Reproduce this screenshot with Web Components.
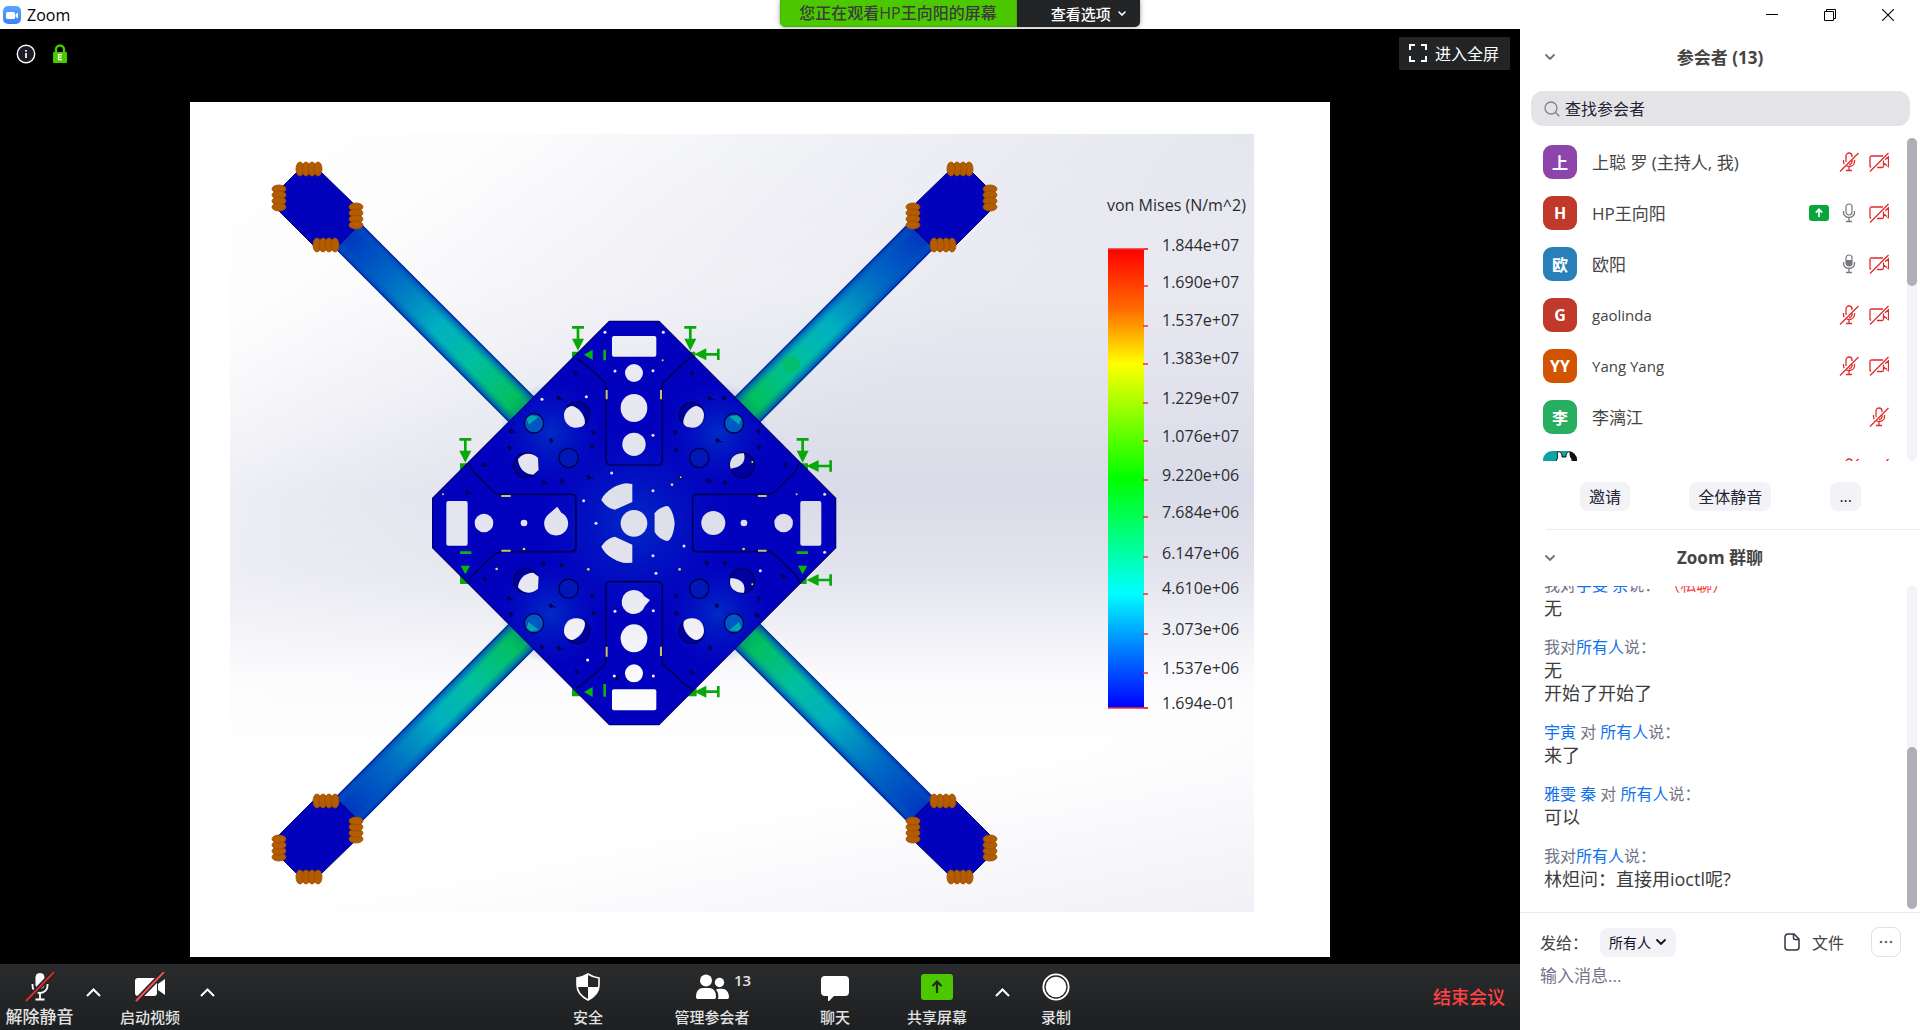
<!DOCTYPE html>
<html lang="zh-CN">
<head>
<meta charset="utf-8">
<title>Zoom</title>
<style>
  html, body { height: 100%; margin: 0; }
  body { overflow: hidden; background: #fff; font-family: "Open Sans", "Noto Sans CJK SC", sans-serif; font-size: 16px; color: #444; }
</style>
</head>
<body>
<zoom-app></zoom-app>
<script>
const RESET = `<style>
  * { box-sizing: border-box; }
  button, input, select, textarea { font: inherit; color: inherit; background: none; border: 0; padding: 0; margin: 0; outline: 0; }
  svg { display: block; }
  a { text-decoration: none; }
</style>`;

function define(name, render) {
  customElements.define(name, class extends HTMLElement {
    connectedCallback() {
      if (this.shadowRoot) return;
      const t = document.createElement('template');
      t.innerHTML = RESET + render(this);
      this.attachShadow({ mode: 'open' }).appendChild(t.content.cloneNode(true));
    }
  });
}

const ICONS = {
  logo: [18, 18, `<defs><linearGradient id="g" x2="0" y2="1"><stop stop-color="#5aa5ff"/><stop offset="1" stop-color="#3a80fb"/></linearGradient></defs><rect width="18" height="18" rx="5" fill="url(#g)"/><rect x="3" y="6" width="9" height="7" rx="1.500" fill="#fff"/><path d="M12.500 8.500 15 6.500v6l-2.500-2z" fill="#fff"/>`],
  info: [20, 20, `<circle cx="10" cy="10" r="8.700" fill="#1c1c26" stroke="#fff" stroke-width="1.400"/><path d="M10 6v1.800M10 9v5" stroke="#fff" stroke-width="1.700"/>`],
  lock: [14, 20, `<path d="M3 9V5.500a4 4 0 0 1 8 0V9" fill="none" stroke="#4bc800" stroke-width="2.400"/><rect y="8" width="14" height="11" rx="1" fill="#4bc800"/><path d="M9 10.700H5.500v5H9M5.500 13.200h3" fill="none" stroke="#fff" stroke-width="1.200"/>`],
  expand: [18, 18, `<path d="M1 6V1h5M12 1h5v5M17 12v5h-5M6 17H1v-5" fill="none" stroke="#fff" stroke-width="2"/>`],
  min: [12, 12, `<path d="M0 5.500h12" stroke="#000"/>`],
  restore: [12, 12, `<path d="M.5 2.500h9v9h-9zM2.500 2.500v-2h9v9h-2" fill="none" stroke="#000"/>`],
  close: [12, 12, `<path d="m0 0 12 12M12 0 0 12" stroke="#000" stroke-width="1.100"/>`],
  down: [10, 6, `<path d="m1 1 4 4 4-4" fill="none" stroke="currentColor" stroke-width="1.800" stroke-linecap="round"/>`],
  caret: [8, 5, `<path d="m1 1 3 3 3-3" fill="none" stroke="currentColor" stroke-width="1.600" stroke-linecap="round"/>`],
  up: [15, 9, `<path d="m1 8 6.500-6.500L14 8" fill="none" stroke="#fff" stroke-width="2"/>`],
  search: [16, 16, `<circle cx="7" cy="7" r="6" fill="none" stroke="#82828f" stroke-width="1.300"/><path d="m11.300 11.300 4 4" stroke="#82828f" stroke-width="1.300"/>`],
  mic: [14, 20, `<rect x="4" y="1" width="6" height="11" rx="3" fill="none" stroke="#77777f" stroke-width="1.200"/><path d="M1.500 8v1.500a5.500 5 0 0 0 11 0V8M7 15v3.500M4 18.500h6" fill="none" stroke="#77777f" stroke-width="1.300"/>`],
  micfill: [14, 20, `<rect x="4" y="1" width="6" height="11" rx="3" fill="#fff" stroke="#77777f" stroke-width="1.200"/><path d="M4 6h6v3a3 3 0 0 1-6 0z" fill="#77777f"/><path d="M1.500 8v1.500a5.500 5 0 0 0 11 0V8M7 15v3.500M4 18.500h6" fill="none" stroke="#77777f" stroke-width="1.300"/>`],
  micoff: [20, 20, `<g fill="none" stroke="#e02b2b" stroke-width="1.300"><path d="M7 10V4a3 3 0 0 1 6 0v1M13 8v2a3 3 0 0 1-3 2.500M4.500 8v1.500c0 1 .3 2 .8 2.700M15.500 8v1.500c0 3-2.500 5-5.500 5-1 0-1.700-.2-2.300-.5M10 15v3.500M7 18.500h6M1 19.500 19.500 1"/></g>`],
  camoff: [20, 20, `<g fill="none" stroke="#e02b2b" stroke-width="1.300"><path d="M14 4H2.500C1.500 4 1 4.500 1 5.500v9l1 1M8 15.500h5c1 0 1.500-.5 1.500-1.500V8.500M14.500 11l5 3.500V4.800l-3.500 3M1 19.500 19.500 1"/></g>`],
  sharing: [20, 16, `<rect width="20" height="16" rx="3" fill="#08a73a"/><path d="M10 12V4.500M6.800 7.600 10 4.300l3.200 3.300" fill="none" stroke="#fff" stroke-width="1.700"/>`],
  bigmic: [30, 30, `<rect x="10.500" y="1" width="9" height="16" rx="4.500" fill="#fff"/><path d="M7.500 12v2a7.500 7 0 0 0 15 0v-2M15 21v6M10.500 27.500h9" fill="none" stroke="#fff" stroke-width="1.800"/><path d="M1 29 29 0" stroke="#222426" stroke-width="5"/><path d="M1 29 29 0" stroke="#e02b2b" stroke-width="1.800"/>`],
  bigcam: [32, 30, `<rect x="1" y="6" width="22" height="18" rx="3" fill="#fff"/><path d="m24 12 7-5v16l-7-5z" fill="#fff"/><path d="M2 29 30 0" stroke="#222426" stroke-width="5"/><path d="M2 29 30 0" stroke="#f05050" stroke-width="2"/>`],
  shield: [24, 28, `<path d="M12 1c3 2 7 3.500 11 4v7c0 7-5 12-11 15C6 24 1 19 1 12V5c4-.5 8-2 11-4z" fill="none" stroke="#fff" stroke-width="1.600"/><path d="M12 1C9 3 5 4.500 1 5v9h11zM12 14h11c-1 6-5 10.500-11 13z" fill="#fff"/>`],
  people: [34, 28, `<circle cx="11" cy="7.500" r="6" fill="#fff"/><path d="M1 24c0-6 3-9 7-9h6c4 0 7 3 7 9 0 1.500-1 2-2 2H3c-1 0-2-.5-2-2z" fill="#fff"/><circle cx="24.500" cy="9.500" r="4.700" fill="#fff"/><path d="M23 26c1-4 0-7-2-9.500 1-.6 2-.8 3-.8h3c4 0 7 3.300 7 8.300 0 1.500-1 2-2 2z" fill="#fff"/>`],
  chat: [28, 28, `<path d="M4 3h20a4 4 0 0 1 4 4v12a4 4 0 0 1-4 4H13l-6 6v-6H4a4 4 0 0 1-4-4V7a4 4 0 0 1 4-4z" fill="#fff"/>`],
  share: [32, 26, `<rect width="32" height="26" rx="3" fill="#4bc800"/><path d="M16 19V8M11.500 12 16 7.500l4.500 4.500" fill="none" stroke="#1f2b1a" stroke-width="2.200"/>`],
  record: [28, 28, `<circle cx="14" cy="14" r="12.600" fill="none" stroke="#fff" stroke-width="1.900"/><circle cx="14" cy="14" r="10.300" fill="#fff"/>`],
  file: [16, 18, `<path d="M4 1h6l5 5v8a3 3 0 0 1-3 3H4a3 3 0 0 1-3-3V4a3 3 0 0 1 3-3zM9.500 1v4a1.500 1.500 0 0 0 1.500 1.500h4" fill="none" stroke="#33334a" stroke-width="1.500"/>`],
  dots: [14, 4, `<circle cx="2" cy="2" r="1.300" fill="#6b6b80"/><circle cx="7" cy="2" r="1.300" fill="#6b6b80"/><circle cx="12" cy="2" r="1.300" fill="#6b6b80"/>`],
  rabbit: [34, 34, `<clipPath id="r"><rect width="34" height="34" rx="9"/></clipPath><g clip-path="url(#r)"><rect width="34" height="34" fill="#0fa3a6"/><path d="M27 0h7v34h-7z" fill="#111"/><path d="M13 34V10c2-3 2-5 1-9 4-1 5 2 5 5h4c0-3 1-6 4-5 0 3 0 5 2 7v26z" fill="#fff" stroke="#111"/></g>`]
};

define('ui-icon', el => {
  const [w, h, body] = ICONS[el.getAttribute('name')];
  return `<style>:host { display: block; flex: none; }</style>
  <svg width="${w}" height="${h}" viewBox="0 0 ${w} ${h}" aria-hidden="true">${body}</svg>`;
});

define('title-bar', () => `
<style>
  :host { display: grid; grid-template-columns: 1fr auto 1fr; height: 29px; background: #fff; color: #000; flex: none; }
  .name { display: flex; align-items: center; gap: 6px; padding-left: 3px; }
  .banner { display: flex; height: 27px; line-height: 26px; border-radius: 0 0 5px 5px; overflow: hidden; box-shadow: 0 0 5px #0006; }
  .watch { background: #4bc800; color: #3c3c3c; padding: 0 19px 0 18px; font-weight: 500; border: 1px solid #43b400; border-top: 0; }
  .options { background: #222426; color: #fff; display: flex; align-items: center; gap: 7px; padding: 0 14px 0 34px; font-size: 15px; font-weight: 500; }
  .win { display: flex; justify-content: flex-end; padding-right: 3px; }
  .win button { width: 58px; display: grid; place-items: center; }
</style>
<div class="name"><ui-icon name="logo"></ui-icon><span>Zoom</span></div>
<div class="banner"><div class="watch">您正在观看HP王向阳的屏幕</div><button class="options">查看选项<ui-icon name="caret"></ui-icon></button></div>
<div class="win">
  <button aria-label="最小化"><ui-icon name="min"></ui-icon></button>
  <button aria-label="还原"><ui-icon name="restore"></ui-icon></button>
  <button aria-label="关闭"><ui-icon name="close"></ui-icon></button>
</div>`);

const LEGEND = [[245,'1.844e+07',249],[282,'1.690e+07',286],[320,'1.537e+07',326],[358,'1.383e+07',364],[398,'1.229e+07',403],[436,'1.076e+07',441],[475,'9.220e+06',480],[512,'7.684e+06',517],[553,'6.147e+06',557],[588,'4.610e+06',594],[629,'3.073e+06',634],[668,'1.537e+06',673],[703,'1.694e-01',708]];

define('stress-plot', () => {
  const cap = (x, y, v) => {
    let s = '';
    for (let i = -9; i <= 9; i += 6) s += `<ellipse cx="${v ? x : x + i}" cy="${v ? y + i : y}" rx="${v ? 7 : 4}" ry="${v ? 4 : 7}"/>`;
    return s;
  };
  const holes = `
    <rect x="576" y="108" width="133" height="62" rx="6"/><rect x="576" y="1168" width="133" height="63" rx="6"/>
    <rect x="79" y="603" width="64" height="134" rx="6"/><rect x="1141" y="603" width="63" height="134" rx="6"/>
    <circle cx="642" cy="219" r="27"/><ellipse cx="642" cy="324" rx="40" ry="42"/><circle cx="642" cy="433" r="35"/>
    <circle cx="642" cy="670" r="40"/>
    <path d="M642 870a36 36 0 1 0 33 48l15-18-17-11a36 36 0 0 0-31-19z"/><ellipse cx="642" cy="1015" rx="40" ry="42"/><circle cx="642" cy="1120" r="27"/>
    <circle cx="192" cy="669" r="28"/><circle cx="312" cy="669" r="10"/><path d="M412 620l12 18a36 36 0 1 1-40 6z"/>
    <circle cx="880" cy="669" r="36"/><circle cx="972" cy="669" r="10"/><circle cx="1091" cy="669" r="28"/>
    <path d="M637 552v54l-52 23c-18-4-32-14-41-30 12-28 52-48 75-49z"/><path d="M637 788v-54l-52-24c-18 4-32 14-41 30 12 28 52 48 75 49z"/>
    <path d="M704 640c6-10 24-22 40-22 10 8 18 28 20 52-2 24-8 46-20 53-16-2-34-14-40-28z"/>
    <path d="M432 345c0-14 10-26 24-27 16 2 38 24 39 48 0 12-12 17-28 17-20 0-35-16-35-38z"/><path d="M294 478c16-20 40-22 60-4l2 36-16 14c-26 0-44-20-46-46z"/>
    <path d="M852 345c0-14-10-26-24-27-16 2-37 24-38 48 0 12 12 17 28 17 20 0 34-16 34-38z"/><path d="M972 460c6 22-4 42-40 46-8-24 8-48 40-46z"/>
    <path d="M294 862c16 20 40 22 60 4l2-36-16-12c-26 0-44 20-46 44z"/><path d="M432 993c0 14 10 26 24 27 16-2 38-24 39-48 0-12-12-17-28-17-20 0-35 16-35 38z"/>
    <path d="M852 993c0 14-10 26-24 27-16-2-37-24-38-48 0-12 12-17 28-17 20 0 34 16 34 38z"/><path d="M972 878c6-22-4-42-40-44-8 24 8 46 40 44z"/>
    <g>${[[699,572],[575,519],[699,767],[708,820],[528,670],[792,738],[699,212],[585,213],[699,406],[700,932],[585,934],[700,1128],[583,1128],[491,602],[555,97],[730,97],[366,298],[1214,583],[1214,757],[499,290],[503,1080],[1021,812]].map(p => `<circle cx="${p[0]}" cy="${p[1]}" r="4.500"/>`).join('')}</g>`;
  const panel = `<path d="M468 175Q485 182 552 244Q558 250 558 265V480Q558 495 572 495H712Q727 495 727 480V250L797 184Q808 176 820 172"/>`;
  const side = `<path d="M150 492Q152 506 162 517L222 576Q230 583 240 583H455Q468 583 468 597V742Q468 755 455 755H240Q230 757 222 764L158 825Q148 836 150 845"/>`;
  const dimples = [[342,370],[446,474],[342,970],[446,866],[942,370],[838,474],[942,970],[838,866]];
  const dark = [[415,294],[520,398],[393,422],[370,548],[424,544],[268,444],[190,495],[515,440],[912,294],[868,296],[765,398],[768,451],[892,422],[1016,442],[1095,495],[864,542],[915,548],[781,532],[505,532],[370,792],[424,796],[266,896],[194,838],[272,944],[392,918],[520,940],[365,1042],[416,1045],[516,888],[768,888],[768,940],[890,918],[1016,896],[1010,946],[860,790],[915,790],[1088,830],[870,1044],[590,1135],[142,578],[467,220],[816,220],[272,394],[1016,394],[470,1117],[813,1117]];
  const downs = [[474,80],[811,80],[136,416],[1148,416]], lefts = [[895,163],[1232,498],[1232,840],[895,1175]];
  return `
<style>
  :host { display: block; background: #fff; }
  svg { width: 100%; height: 100%; }
  text { font-family: "Open Sans", sans-serif; font-size: 16px; fill: #2c2c30; }
</style>
<svg viewBox="190 102 1140 855" role="img" aria-label="von Mises">
  <defs>
    <linearGradient id="sky" gradientUnits="userSpaceOnUse" x1="0" y1="134" x2="0" y2="912">
      <stop stop-color="#e5e7ef"/><stop offset=".2" stop-color="#e9e9f1"/><stop offset=".46" stop-color="#d9dbe8"/><stop offset=".56" stop-color="#e2e3ed"/><stop offset=".7" stop-color="#fbfbfd"/><stop offset=".8" stop-color="#fff"/><stop offset="1" stop-color="#fff"/>
    </linearGradient>
    <linearGradient id="haze" gradientUnits="userSpaceOnUse" x1="350" y1="60" x2="700" y2="560">
      <stop stop-color="#fff"/><stop offset=".25" stop-color="#fff" stop-opacity=".9"/><stop offset=".6" stop-color="#fff" stop-opacity=".35"/><stop offset=".95" stop-color="#fff" stop-opacity="0"/>
    </linearGradient>
    <linearGradient id="floor" gradientUnits="userSpaceOnUse" x1="1100" y1="740" x2="1140" y2="940">
      <stop stop-color="#f1f0f6" stop-opacity="0"/><stop offset="1" stop-color="#f1f0f6"/>
    </linearGradient>
    <linearGradient id="scale" x2="0" y2="1">
      <stop stop-color="#f00"/><stop offset=".13" stop-color="#ff6a00"/><stop offset=".25" stop-color="#ff0"/><stop offset=".5" stop-color="#0f0"/><stop offset=".75" stop-color="#0ff"/><stop offset=".87" stop-color="#0080ff"/><stop offset="1" stop-color="#00f"/>
    </linearGradient>
    <linearGradient id="along"><stop stop-color="#0030c0"/><stop offset=".25" stop-color="#0068c4"/><stop offset=".5" stop-color="#00b0c0"/><stop offset=".68" stop-color="#00bfa0"/><stop offset=".9" stop-color="#02c05a"/></linearGradient>
    <linearGradient id="across" x2="0" y2="1"><stop stop-color="#0018a0"/><stop offset=".07" stop-color="#0048b8" stop-opacity=".7"/><stop offset=".28" stop-color="#0068c0" stop-opacity="0"/><stop offset=".72" stop-color="#0068c0" stop-opacity="0"/><stop offset=".93" stop-color="#0048b8" stop-opacity=".7"/><stop offset="1" stop-color="#0018a0"/></linearGradient>
    <radialGradient id="glow"><stop stop-color="#0040c8" stop-opacity=".65"/><stop offset="1" stop-color="#0020c8" stop-opacity="0"/></radialGradient>
    <mask id="cut"><rect width="1300" height="1340" fill="#fff"/><g fill="#000">${holes}</g></mask>
    <g id="arm">
      <g transform="translate(350 238) rotate(45)"><rect x="-12" y="-18" width="274" height="36" fill="url(#along)"/><rect x="-12" y="-18" width="274" height="36" fill="url(#across)"/></g>
      <path d="M297 172h24l36 35v20l-21 21h-20l-37-37v-21z" fill="#0202bc" stroke="#00007a"/>
      <g fill="#b35c00" stroke="#9a4c00" stroke-width=".8">${cap(309,169)}${cap(279,198,1)}${cap(356,216,1)}${cap(326,245)}</g>
    </g>
    <g id="dn"><path d="M-18 2h36M0 2v38" stroke="#08a808" stroke-width="8"/><path d="M-18 36H18L0 72z" fill="#08a808"/></g>
    <g id="lf"><path d="M0-17v34M0 0h-40" stroke="#08a808" stroke-width="8"/><path d="M-36-18V18L-72 0z" fill="#08a808"/></g>
  </defs>
  <rect x="230" y="134" width="1024" height="778" fill="url(#sky)"/>
  <rect x="230" y="134" width="1024" height="778" fill="url(#haze)"/>
  <rect x="230" y="700" width="1024" height="212" fill="url(#floor)"/>
  <use href="#arm"/><use href="#arm" transform="matrix(-1 0 0 1 1269 0)"/><use href="#arm" transform="matrix(1 0 0 -1 0 1046)"/><use href="#arm" transform="matrix(-1 0 0 -1 1269 1046)"/>
  <circle cx="791" cy="364" r="9" fill="#04bf50" opacity=".6"/>
  <g transform="translate(420 300) scale(.3333)">
    <g fill="#08a808"><path d="M456 155h30v22h-30zM796 155h30v22h-30zM120 490h30v22h-30zM1134 490h30v22h-30zM120 828h34v24h-34zM1130 828h30v24h-30zM456 1165h34v24h-34zM800 1165h30v24h-30z"/></g>
    <g mask="url(#cut)">
      <path d="M568 64H717L1247 595V743L717 1274H568L38 743V595z" fill="#0202be" stroke="#000078" stroke-width="4"/>
      <circle cx="642" cy="670" r="280" fill="url(#glow)"/>
      ${[[390,400],[894,400],[390,940],[894,940]].map(p => `<circle cx="${p[0]}" cy="${p[1]}" r="150" fill="url(#glow)"/>`).join('')}
      <g fill="#0000a0" stroke="#000050" stroke-width="4"><circle cx="472" cy="342" r="37"/><circle cx="318" cy="496" r="37"/><circle cx="815" cy="345" r="37"/><circle cx="967" cy="496" r="37"/><circle cx="318" cy="842" r="37"/><circle cx="472" cy="994" r="37"/><circle cx="815" cy="994" r="37"/><circle cx="967" cy="842" r="37"/></g>
      <g fill="none" stroke="#000058" stroke-width="5">${panel}${side}<g transform="matrix(1 0 0 -1 0 1340)">${panel}</g><g transform="matrix(-1 0 0 1 1286 0)">${side}</g></g>
      <g stroke="#000048" stroke-width="4">${dimples.map((p, i) => `<circle cx="${p[0]}" cy="${p[1]}" r="29" fill="${i % 2 ? '#0018b8' : '#0058c4'}"/>`).join('')}</g>
      <g fill="#00a8b0"><path d="M320 356l12-10 24 4-30 24zM964 356l-12-10-24 4 30 24zM320 984l12 10 24-4-30-24zM964 984l-12 10-24-4 30-24z"/></g>
      <g fill="#000a60" stroke="#000040" stroke-width="3">${dark.map((p, i) => `<path d="M${p[0] - 5} ${p[1] - 3}l7-3 4 7-6 5z${i % 3 ? '' : 'm8 4l12 3'}"/>`).join('')}</g>
    </g>
    <path d="M560 270v28M723 270v28M560 1040v30M723 1040v28M244 588h28M1014 588h26M244 752h28M1014 752h26" stroke="#c9c470" stroke-width="6"/>
    <g fill="#d8e040"><circle cx="756" cy="554" r="4"/><circle cx="782" cy="532" r="3"/><circle cx="230" cy="807" r="4"/><circle cx="505" cy="808" r="4"/><circle cx="779" cy="808" r="4"/><circle cx="728" cy="181" r="3"/><circle cx="997" cy="486" r="3"/><circle cx="997" cy="853" r="3"/><circle cx="971" cy="747" r="4"/><circle cx="312" cy="747" r="4"/><circle cx="1130" cy="583" r="3"/><circle cx="69" cy="583" r="3"/></g>
    ${downs.map(p => `<use href="#dn" transform="translate(${p})"/>`).join('')}${lefts.map(p => `<use href="#lf" transform="translate(${p})"/>`).join('')}
    <g fill="#08b808"><path d="M518 149v30l-26-15zM518 1161v30l-26-15zM122 797h28l-14 26zM1134 797h28l-14 26z"/><path d="M550 149h8v32h-8zM550 1152h8v38h-8zM120 754h34v8h-34zM1130 754h34v8h-34z"/></g>
  </g>
  <rect x="1108" y="249" width="36" height="459" fill="url(#scale)"/>
  <g stroke="#f03030" stroke-width="1.500"><path d="M1108 249h40M1108 708h40"/>${LEGEND.map(l => `<path d="M1143 ${l[2]}h5"/>`).join('')}</g>
  <text x="1107" y="211">von Mises (N/m^2)</text>
  ${LEGEND.map(l => `<text x="1162" y="${l[0] + 6}">${l[1]}</text>`).join('')}
</svg>`;
});

define('share-stage', () => `
<style>
  :host { display: flex; flex-direction: column; align-items: center; flex: 1; min-height: 0; background: #000; color: #fff; }
  .top { display: flex; width: 100%; height: 73px; align-items: flex-start; padding: 8px 10px 0 16px; flex: none; }
  .badges { display: flex; gap: 17px; padding-top: 7px; flex: 1; }
  .full { display: flex; align-items: center; gap: 8px; height: 33px; padding: 0 11px 2px 10px; background: #222426; }
  stress-plot { width: 75%; flex: 1; min-height: 0; margin-bottom: 7px; }
</style>
<div class="top"><div class="badges"><ui-icon name="info"></ui-icon><ui-icon name="lock"></ui-icon></div>
<button class="full"><ui-icon name="expand"></ui-icon>进入全屏</button></div>
<stress-plot></stress-plot>`);

define('tool-button', el => `
<style>
  :host { display: block; flex: none; width: var(--w); }
  button { display: flex; flex-direction: column; align-items: center; width: 100%; padding-top: 8px; gap: 5px; color: #e2e2e2; white-space: nowrap; font-weight: 500; }
  .icon { position: relative; height: 30px; display: grid; place-items: center; }
  .count { position: absolute; left: 39px; top: -2px; line-height: 20px; font-size: 15px; font-weight: 600; }
  .label { font-size: var(--size, 15px); line-height: 20px; }
</style>
<button><span class="icon"><ui-icon name="${el.getAttribute('icon')}"></ui-icon>${el.hasAttribute('count') ? `<span class="count">${el.getAttribute('count')}</span>` : ''}</span><span class="label"><slot></slot></span></button>`);

define('tool-caret', () => `
<style>
  :host { display: block; flex: none; width: var(--w, 28px); }
  button { display: grid; place-items: center; width: 100%; height: 56px; }
</style>
<button aria-label="更多选项"><ui-icon name="up"></ui-icon></button>`);

define('meeting-toolbar', () => `
<style>
  :host { display: grid; grid-template-columns: auto 1fr auto 1fr auto; height: 66px; flex: none; background: linear-gradient(#292b2d, #1d1f21); }
  div { display: flex; }
  .end { align-self: center; color: #ff4242; font-size: 18px; line-height: 24px; padding: 0 15px 0 43px; font-weight: 500; }
</style>
<div><tool-button icon="bigmic" style="--w:79px;--size:17px">解除静音</tool-button><tool-caret></tool-caret><tool-button icon="bigcam" style="--w:86px">启动视频</tool-button><tool-caret style="--w:29px"></tool-caret></div>
<span></span>
<div><tool-button icon="shield" style="--w:124px">安全</tool-button><tool-button icon="people" count="13" style="--w:124px">管理参会者</tool-button><tool-button icon="chat" style="--w:122px">聊天</tool-button><tool-button icon="share" style="--w:82px">共享屏幕</tool-button><tool-caret style="--w:48px"></tool-caret><tool-button icon="record" style="--w:60px">录制</tool-button></div>
<span></span>
<button class="end">结束会议</button>`);

define('panel-head', () => `
<style>
  :host { display: grid; grid-template-columns: 20px 1fr 20px; align-items: center; height: 56px; padding: 0 20px; flex: none; }
  button { color: #6e6e80; display: grid; place-items: center; height: 24px; }
  h2 { margin: 0; padding-bottom: 2px; text-align: center; font-size: 17px; font-weight: 700; color: #444; }
</style>
<button aria-label="收起"><ui-icon name="down"></ui-icon></button><h2><slot></slot></h2>`);

define('scroll-track', el => `
<style>
  :host { display: flex; flex-direction: column; width: 10px; border-radius: 5px; background: #f2f2f7; flex: none; justify-content: ${el.getAttribute('at') || 'flex-start'}; }
  i { display: block; height: ${el.getAttribute('size')}; border-radius: 5px; background: #afafb8; }
</style><i></i>`);

define('participant-row', el => {
  const a = n => el.getAttribute(n) || '';
  return `
<style>
  :host { display: flex; align-items: center; height: 51px; flex: none; }
  .av { width: 34px; height: 34px; border-radius: 9px; background: ${a('color')}; color: #fff; font-size: 16px; font-weight: 700; display: grid; place-items: center; margin-right: 15px; flex: none; }
  .name { flex: 1; font-size: ${el.hasAttribute('latin') ? 15 : 17}px; white-space: nowrap; }
  .icons { display: flex; align-items: center; gap: 10px; }
  ui-icon[name^="mic"]:not([name="micoff"]) { margin: 0 3px; }
</style>
<span class="av">${a('avatar') ? `<ui-icon name="${a('avatar')}"></ui-icon>` : a('initial')}</span><span class="name"><slot></slot></span>
<span class="icons">${a('icons').split(' ').map(n => `<ui-icon name="${n}"></ui-icon>`).join('')}</span>`;
});

define('participants-panel', () => `
<style>
  :host { display: flex; flex-direction: column; flex: 1 1 0; min-height: 0; }
  .search { display: flex; align-items: center; gap: 5px; margin: 6px 10px 0 11px; height: 35px; padding: 0 13px; border-radius: 12px; background: #e4e4e7; flex: none; }
  .search input { flex: 1; min-width: 0; height: 100%; color: #232333; }
  .search input::placeholder { color: #232333; opacity: 1; }
  .body { display: flex; margin-top: 12px; flex: 1; min-height: 0; padding-right: 3px; }
  .list { flex: 1; overflow: hidden; }
  .rows { display: flex; flex-direction: column; padding: 0 18px 0 23px; margin-top: -2px; }
  .actions { display: flex; justify-content: space-between; padding: 21px 59px 18px 60px; flex: none; }
  .actions button { height: 29px; padding: 0 9px; border-radius: 8px; background: #f2f2f7; color: #232333; min-width: 28px; }
  hr { border: 0; height: 1px; background: #ededf2; margin: 0 0 0 26px; flex: none; width: calc(100% - 26px); }
</style>
<panel-head>参会者 (13)</panel-head>
<label class="search"><ui-icon name="search"></ui-icon><input type="text" placeholder="查找参会者" aria-label="查找参会者"></label>
<div class="body"><div class="list"><div class="rows">
  <participant-row color="#8e44ad" initial="上" icons="micoff camoff">上聪 罗 (主持人, 我)</participant-row>
  <participant-row color="#c0392b" initial="H" icons="sharing mic camoff">HP王向阳</participant-row>
  <participant-row color="#2980b9" initial="欧" icons="micfill camoff">欧阳</participant-row>
  <participant-row latin color="#c0392b" initial="G" icons="micoff camoff">gaolinda</participant-row>
  <participant-row latin color="#d35400" initial="YY" icons="micoff camoff">Yang Yang</participant-row>
  <participant-row color="#27ae60" initial="李" icons="micoff">李漓江</participant-row>
  <participant-row avatar="rabbit" icons="micoff camoff"></participant-row>
</div></div><scroll-track size="46%"></scroll-track></div>
<div class="actions"><button>邀请</button><button>全体静音</button><button aria-label="更多">...</button></div>
<hr>`);

define('chat-message', () => `
<style>
  :host { display: block; flex: none; margin-bottom: 16px; color: #3c3c3c; font-size: 18px; line-height: 23px; }
  .head { display: block; font-size: 16px; color: #747487; }
  ::slotted(div) { display: block; }
</style>
<div class="head"><slot name="from"></slot></div><slot></slot>`);

define('message-author', () => `
<style>
  :host { display: inline; }
  ::slotted(a) { color: #0e72ed; text-decoration: none; }
  ::slotted(em) { color: #f04848; font-style: normal; margin-left: 12px; }
</style><slot></slot>`);

define('chat-panel', () => `
<style>
  :host { display: flex; flex-direction: column; flex: 1 1 0; min-height: 0; }
  .body { display: flex; flex: 1; min-height: 0; padding-right: 3px; }
  .log { flex: 1; overflow: hidden; display: flex; flex-direction: column; justify-content: flex-end; padding: 0 0 2px 24px; }
  .foot { border-top: 1px solid #e6e8f5; height: 118px; margin-top: 3px; padding: 14px 20px 0; flex: none; display: flex; flex-direction: column; }
  .row { display: flex; align-items: center; height: 30px; color: #444; }
  .to { position: relative; display: flex; align-items: center; margin-left: 12px; height: 29px; border-radius: 8px; background: #f2f2f7; color: #131324; }
  select { appearance: none; font-size: 14px; height: 29px; width: 76px; padding-left: 9px; }
  .to ui-icon { position: absolute; right: 10px; pointer-events: none; }
  .file { display: flex; align-items: center; gap: 12px; margin-left: auto; }
  .more { width: 30px; height: 30px; border: 1px solid #e0e0ea; border-radius: 8px; display: grid; place-items: center; margin: 0 -1px 0 27px; }
  textarea { flex: 1; resize: none; margin-top: 5px; font-size: 17px; line-height: 28px; }
  textarea::placeholder { color: #747487; opacity: 1; }
</style>
<panel-head>Zoom 群聊</panel-head>
<div class="body"><div class="log">
  <chat-message><message-author slot="from">我对<a href="#">宇雯 余</a>说：<em>（私聊）</em></message-author><div>无</div></chat-message>
  <chat-message><message-author slot="from">我对<a href="#">所有人</a>说：</message-author><div>无</div><div>开始了开始了</div></chat-message>
  <chat-message><message-author slot="from"><a href="#">宇寅</a> 对 <a href="#">所有人</a>说：</message-author><div>来了</div></chat-message>
  <chat-message><message-author slot="from"><a href="#">雅雯 秦</a> 对 <a href="#">所有人</a>说：</message-author><div>可以</div></chat-message>
  <chat-message><message-author slot="from">我对<a href="#">所有人</a>说：</message-author><div>林炟问：直接用ioctl呢?</div></chat-message>
</div><scroll-track size="50%" at="flex-end"></scroll-track></div>
<div class="foot">
  <div class="row"><label for="to">发给：</label><span class="to"><select id="to"><option>所有人</option></select><ui-icon name="down"></ui-icon></span>
  <button class="file"><ui-icon name="file"></ui-icon>文件</button><button class="more" aria-label="更多"><ui-icon name="dots"></ui-icon></button></div>
  <textarea placeholder="输入消息..." aria-label="输入消息"></textarea>
</div>`);

define('zoom-app', () => `
<style>
  :host { display: flex; flex-direction: column; height: 100vh; }
  main { display: flex; flex: 1; min-height: 0; }
  .left { flex: 1; min-width: 0; display: flex; flex-direction: column; }
  aside { width: 400px; flex: none; display: flex; flex-direction: column; background: #fff; }
</style>
<title-bar></title-bar>
<main><div class="left"><share-stage></share-stage><meeting-toolbar></meeting-toolbar></div>
<aside><participants-panel></participants-panel><chat-panel></chat-panel></aside></main>`);
</script>
</body>
</html>
